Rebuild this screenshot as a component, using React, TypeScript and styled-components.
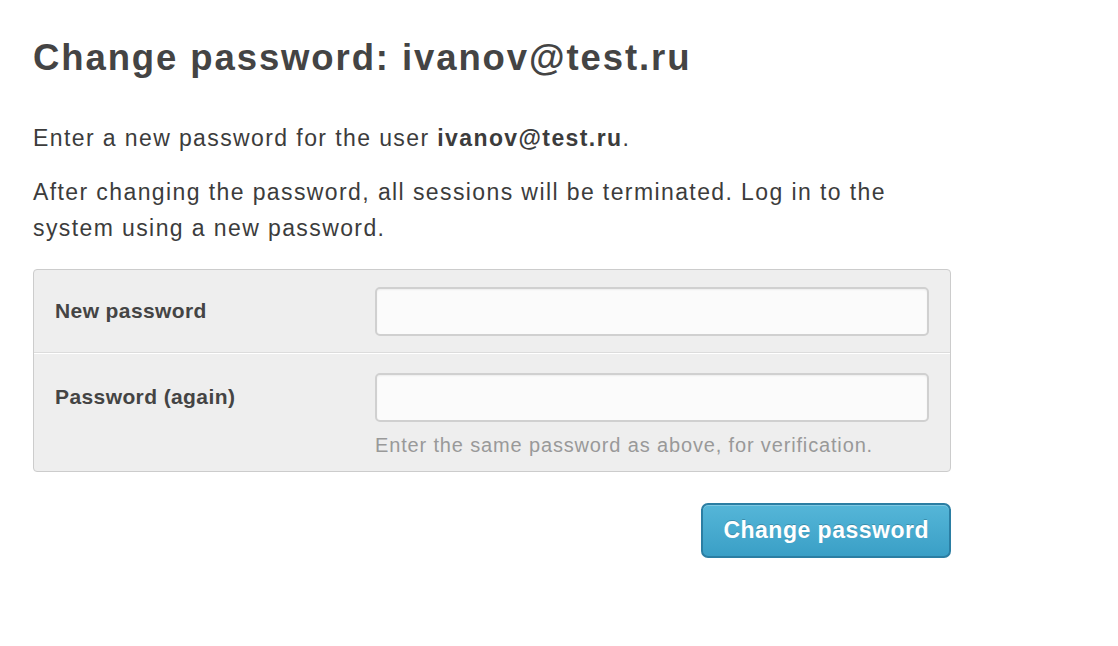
import styled, { createGlobalStyle } from "styled-components";

const GlobalStyle = createGlobalStyle`
  html, body {
    margin: 0;
    padding: 0;
    background: #ffffff;
  }
  body {
    font-family: "Liberation Sans", Arial, Helvetica, sans-serif;
    color: #3c3c3c;
  }
`;

const Page = styled.div`
  width: 918px;
  padding: 32px 0 0 33px;
`;

const Title = styled.h1`
  margin: 0 0 36px;
  font-size: 36.5px;
  line-height: 52px;
  letter-spacing: 1.9px;
  font-weight: bold;
  color: #444444;
`;

const Text = styled.p`
  margin: 0 0 18px;
  font-size: 23px;
  line-height: 36px;
  letter-spacing: 1.4px;
  color: #3c3c3c;
`;

const FormBox = styled.div`
  margin-top: 23px;
  background: #eeeeee;
  border: 1px solid #cccccc;
  border-radius: 4px;
`;

const Row = styled.div<{ $first?: boolean }>`
  display: grid;
  grid-template-columns: 320px 1fr;
  padding: ${(p) => (p.$first ? "17px 21px 16px" : "19px 21px 14px")};
  border-bottom: ${(p) => (p.$first ? "1px solid #dcdcdc" : "none")};
  border-top: ${(p) => (p.$first ? "none" : "1px solid #ffffff")};
`;

const Label = styled.label`
  font-size: 21px;
  font-weight: bold;
  letter-spacing: 0.4px;
  color: #444444;
  line-height: 48px;
`;

const Field = styled.div`
  display: flex;
  flex-direction: column;
`;

const Input = styled.input`
  box-sizing: border-box;
  height: 49px;
  width: 100%;
  border: 2px solid #d0d0d0;
  border-radius: 5px;
  background: #fbfbfb;
  box-shadow: inset 0 1px 2px rgba(0, 0, 0, 0.06);
  font-family: inherit;
  font-size: 20px;
  padding: 0 12px;
`;

const Help = styled.span`
  margin-top: 11px;
  font-size: 20px;
  line-height: 24px;
  letter-spacing: 0.85px;
  color: #999999;
`;

const Actions = styled.div`
  display: flex;
  justify-content: flex-end;
  padding-top: 31px;
`;

const Button = styled.button`
  height: 55px;
  padding: 0 20px;
  border: 2px solid #2b7ea3;
  border-radius: 7px;
  background: linear-gradient(to bottom, #55b6d8, #3a9fc6);
  box-shadow: inset 0 1px 0 rgba(255, 255, 255, 0.25);
  color: #ffffff;
  font-family: inherit;
  font-size: 23px;
  font-weight: bold;
  letter-spacing: 0.5px;
  text-shadow: 0 -1px 0 rgba(0, 0, 0, 0.2);
`;

export default function App() {
  return (
    <Page>
      <GlobalStyle />
      <Title>Change password: ivanov@test.ru</Title>
      <Text>
        Enter a new password for the user <b>ivanov@test.ru</b>.
      </Text>
      <Text>
        After changing the password, all sessions will be terminated. Log in to
        the system using a new password.
      </Text>
      <FormBox>
        <Row $first>
          <Label>New password</Label>
          <Field>
            <Input type="password" />
          </Field>
        </Row>
        <Row>
          <Label>Password (again)</Label>
          <Field>
            <Input type="password" />
            <Help>Enter the same password as above, for verification.</Help>
          </Field>
        </Row>
      </FormBox>
      <Actions>
        <Button>Change password</Button>
      </Actions>
    </Page>
  );
}
